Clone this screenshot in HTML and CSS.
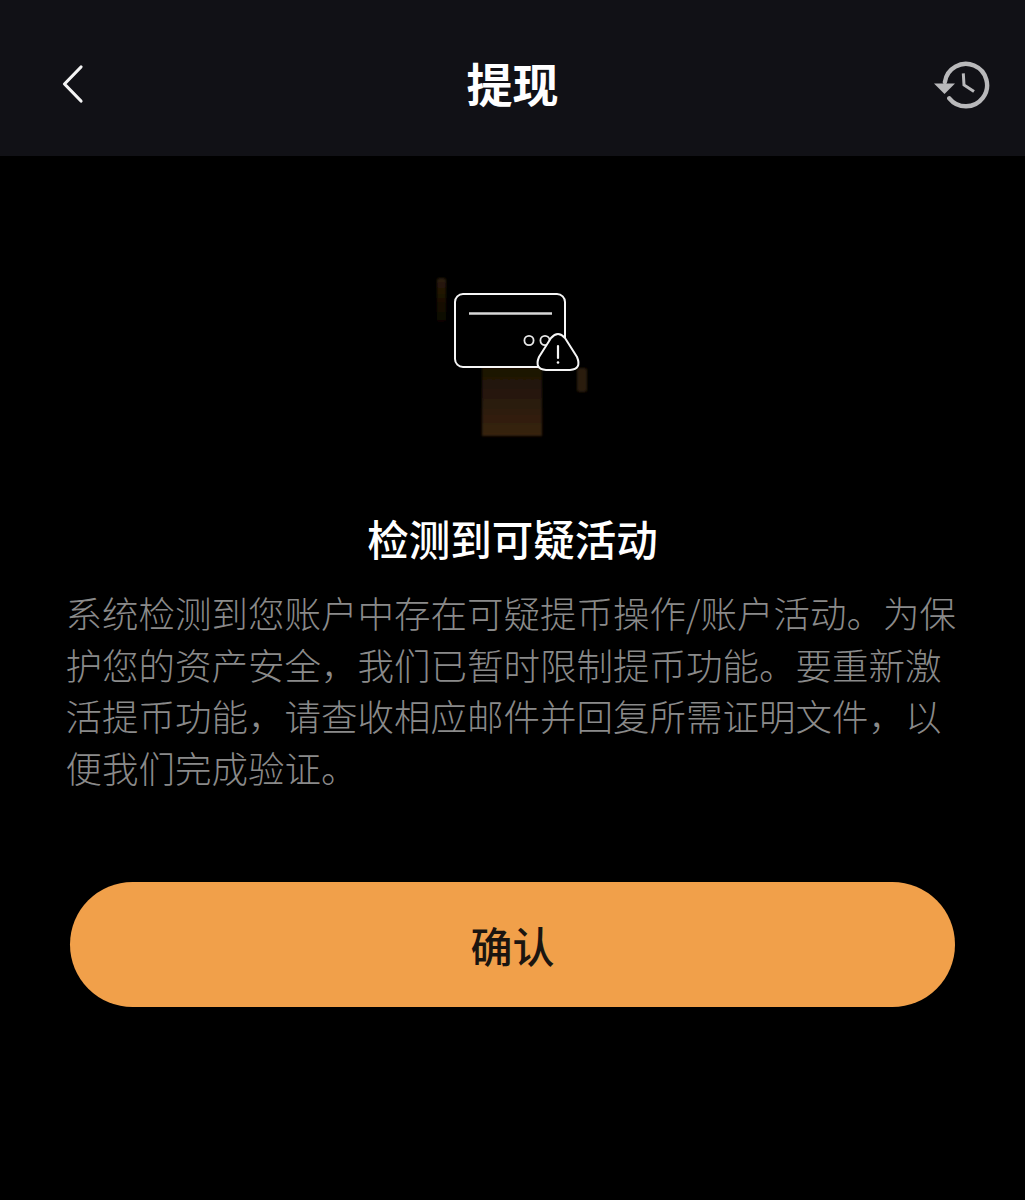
FILE: index.html
```html
<!DOCTYPE html>
<html lang="zh-CN">
<head>
    <meta charset="UTF-8">
    <meta name="viewport" content="width=device-width, initial-scale=1.0">
    <title>提现</title>
    <link rel="stylesheet" href="styles.css">
</head>
<body>

    <header class="nav">
        <button class="nav-btn" aria-label="返回">
            <svg width="24" height="40" viewBox="0 0 24 40" fill="none" stroke="#f4f4f4" stroke-width="3.2" stroke-linecap="round" stroke-linejoin="round">
                <path d="M20 3 L3.5 20 L20 37"/>
            </svg>
        </button>
        <h1 class="nav-title">提现</h1>
        <button class="nav-btn nav-btn-right" aria-label="提现记录">
            <svg width="58" height="50" viewBox="0 0 58 50" fill="none" stroke="#b9b9bb" stroke-width="4.4">
                <path d="M11.900 23 A21.200 21.200 0 1 1 16.300 39.300" stroke-linecap="round"/>
                <path d="M30.300 14.300 L31 26 L41 32.600" stroke-width="3"/>
                <path d="M1 24.500 H22 L11.500 35 Z" fill="#b9b9bb" stroke="none"/>
            </svg>
        </button>
    </header>

    <main class="content">
        <svg class="card-art" width="180" height="190" viewBox="0 0 180 190" fill="none">
            <defs>
                <linearGradient id="glowTall" x1="0" y1="0" x2="0" y2="1">
                    <stop offset="0" stop-color="#150d04"/>
                    <stop offset="1" stop-color="#38230c"/>
                </linearGradient>
                <linearGradient id="glowSide" x1="0" y1="0" x2="0" y2="1">
                    <stop offset="0" stop-color="#2c1c08"/>
                    <stop offset="1" stop-color="#0a0602"/>
                </linearGradient>
                <filter id="soft" x="-30%" y="-30%" width="160%" height="160%">
                    <feGaussianBlur stdDeviation="1"/>
                </filter>
            </defs>
            <!-- soft amber bars behind the card -->
            <g filter="url(#soft)">
                <rect x="17" y="18" width="9" height="44" rx="3" fill="url(#glowSide)"/>
                <rect x="157" y="108" width="10" height="24" rx="3" fill="#2a1a08"/>
                <rect x="62" y="90" width="60" height="86" fill="url(#glowTall)"/>
                <rect x="66" y="14" width="56" height="20" fill="#060502"/>
            </g>
            <!-- card -->
            <rect x="35" y="34" width="110" height="73" rx="8" fill="#000" stroke="#f6f6f6" stroke-width="2"/>
            <path d="M49 53.500 H132" stroke="#d8d8d8" stroke-width="2.400"/>
            <circle cx="109" cy="80.500" r="4.600" stroke="#e8e8e8" stroke-width="1.800"/>
            <circle cx="125" cy="80.500" r="4.600" stroke="#e8e8e8" stroke-width="1.800"/>
            <!-- warning badge -->
            <path d="M131 78 Q138 70 145 78 L157 97 Q162 109 150 110 H126 Q114 109 119 97 Z" fill="#000" stroke="#f6f6f6" stroke-width="2"/>
            <path d="M138 86 V98" stroke="#f6f6f6" stroke-width="2.200" stroke-linecap="round"/>
            <circle cx="138" cy="102.500" r="1.300" fill="#f6f6f6"/>
        </svg>

        <h2 class="heading">检测到可疑活动</h2>
        <p class="message">系统检测到您账户中存在可疑提币操作/账户活动。为保护您的资产安全，我们已暂时限制提币功能。要重新激活提币功能，请查收相应邮件并回复所需证明文件，以便我们完成验证。</p>

        <button class="confirm-btn">确认</button>
    </main>

</body>
</html>
```

FILE: styles.css
```css
body {
    font-family: "Noto Sans CJK SC", "Noto Sans", sans-serif;
    margin: 0;
    padding: 0;
    height: 1200px;
    overflow: hidden;
    background-color: #000;
}
button {
    font-family: inherit;
    border: none;
    padding: 0;
    background: none;
}
.nav {
    height: 156px;
    box-sizing: border-box;
    display: grid;
    grid-template-columns: 1fr auto 1fr;
    align-items: center;
    padding: 12px 34px 0 61px;
    background-color: #111116;
}
.nav-btn {
    display: flex;
    align-items: center;
}
.nav-btn-right {
    justify-self: end;
}
.nav-title {
    margin: 0 0 4px -27px;
    font-size: 46px;
    font-weight: 700;
    line-height: 60px;
    color: #fff;
}
.content {
    display: flex;
    flex-direction: column;
    align-items: center;
}
.card-art {
    margin: 104px 5px 0 0;
}
.heading {
    margin: 59px 0 0;
    font-size: 41.500px;
    font-weight: 500;
    line-height: 58px;
    color: #fff;
}
.message {
    width: 892px;
    margin: 20px 2px 0 0;
    font-size: 36.500px;
    line-height: 51.700px;
    font-weight: 300;
    color: #8a8a8a;
}
.confirm-btn {
    width: 885px;
    height: 125px;
    margin-top: 88px;
    border-radius: 63px;
    background-color: #f1a04a;
    font-size: 42px;
    font-weight: 500;
    color: #1b1510;
}
```
